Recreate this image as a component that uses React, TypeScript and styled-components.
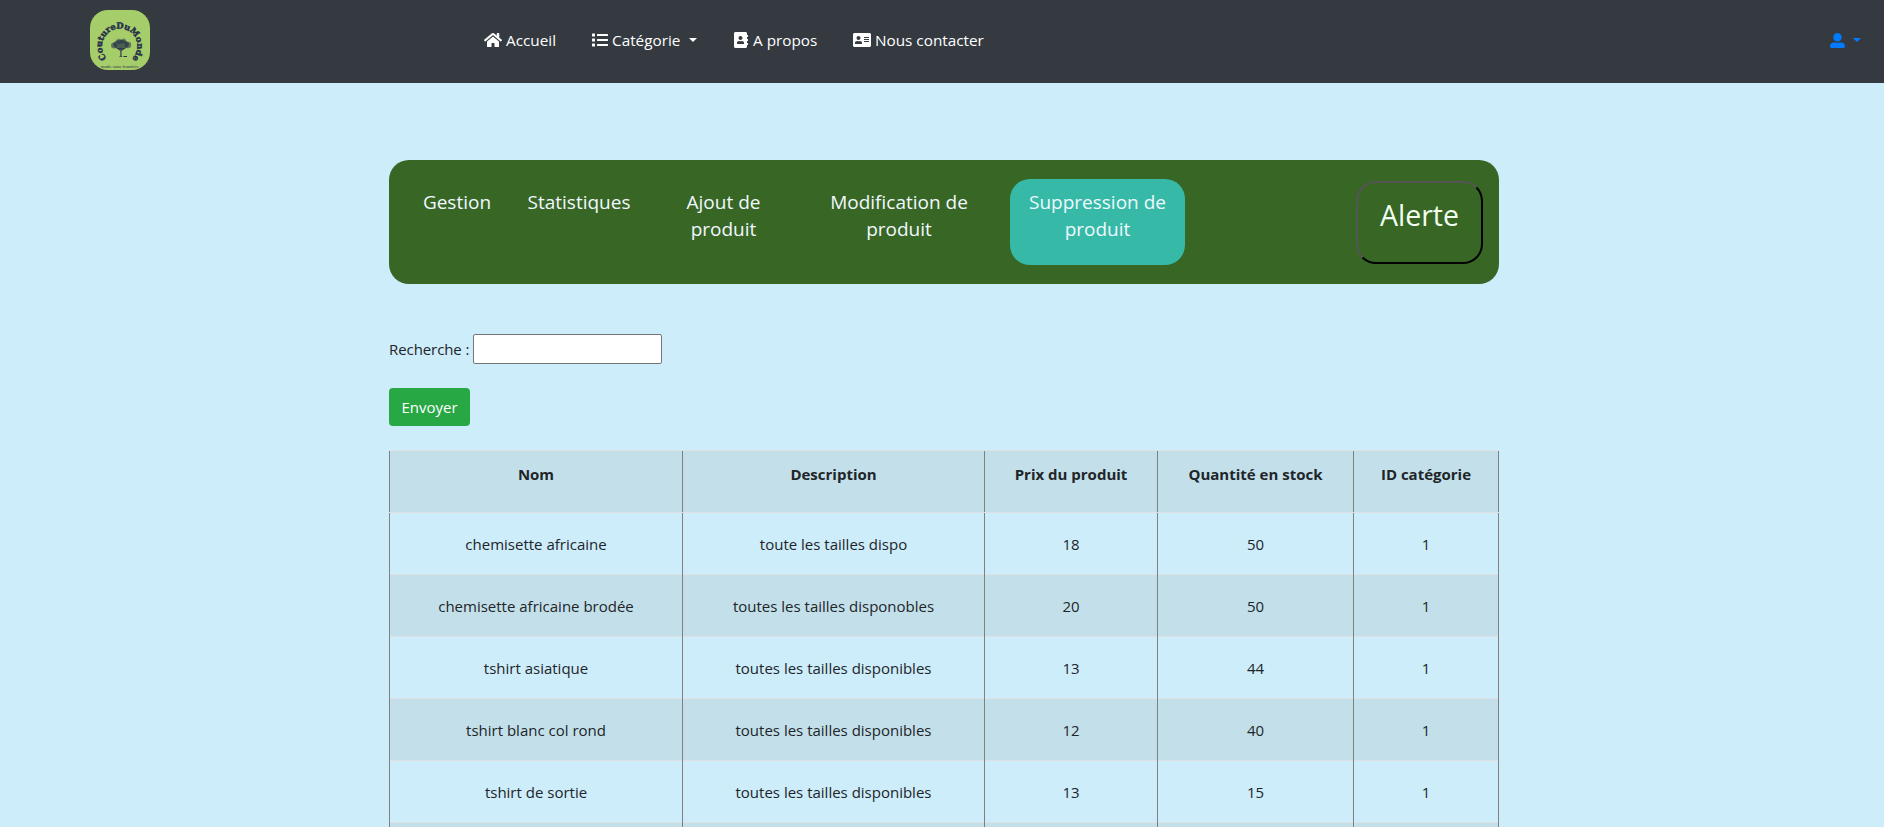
import React from "react";
import styled, { createGlobalStyle, css } from "styled-components";
import { FaHome, FaList, FaAddressBook, FaAddressCard, FaUserAlt } from "react-icons/fa";

const GlobalStyle = createGlobalStyle`
  *, *::before, *::after { box-sizing: border-box; }
  body {
    margin: 0;
    background: #cdedfa;
    color: #212529;
    font-family: "Segoe UI", "Open Sans", "Noto Sans", sans-serif;
    font-size: 15px;
    line-height: 24px;
  }
`;

const Screen = styled.div`
  height: 100vh;
  overflow: hidden;
`;

const Navbar = styled.nav`
  display: flex;
  align-items: center;
  height: 83px;
  padding: 0 23px 3px 90px;
  background: #343a40;
`;

const Logo = styled.svg`
  display: block;
  width: 60px;
  height: 60px;
  margin-right: 334px;
`;

const NavList = styled.ul`
  display: flex;
  gap: 36px;
  margin: 0;
  padding: 0;
  list-style: none;
`;

const NavLink = styled.a<{ $width: number }>`
  display: flex;
  align-items: center;
  width: ${(p) => p.$width}px;
  color: #fff;
  font-size: 15.3px;
  white-space: nowrap;
  text-decoration: none;

  svg {
    flex: none;
    margin-right: 4px;
  }
`;

const Caret = styled.span`
  margin-left: 9px;
  border-top: 4.8px solid;
  border-right: 4.8px solid transparent;
  border-left: 4.8px solid transparent;
`;

const UserMenu = styled.a`
  display: flex;
  align-items: center;
  margin-left: auto;
  color: #007bff;

  ${Caret} {
    margin-left: 8px;
  }
`;

const Page = styled.main`
  width: 1110px;
  margin: 77px 0 0 389px;
`;

const Banner = styled.div`
  display: flex;
  align-items: flex-start;
  height: 124px;
  padding: 19px 16px 0 15px;
  border-radius: 20px;
  background: #386625;
`;

const Tab = styled.a<{ $width: number; $active?: boolean }>`
  width: ${(p) => p.$width}px;
  height: 86px;
  padding-top: 10px;
  border-radius: 20px;
  color: #f0f8ff;
  font-size: 19px;
  line-height: 27px;
  text-align: center;
  white-space: pre-line;
  ${(p) =>
    p.$active &&
    css`
      margin-left: 11px;
      background: #36baa7;
    `}
`;

const AlertButton = styled.button`
  width: 127px;
  height: 83px;
  margin: 2px 0 0 auto;
  padding: 0 0 15px;
  border: 2px solid;
  border-color: #555 #000 #000 #555;
  border-radius: 20px;
  background: transparent;
  color: #f0fff0;
  font: 28.5px "Segoe UI", "Open Sans", sans-serif;
`;

const SearchForm = styled.form`
  margin-top: 50px;
`;

const Field = styled.label`
  display: flex;
  align-items: center;
`;

const FieldName = styled.span`
  width: 84px;
  letter-spacing: -0.08px;
`;

const SearchInput = styled.input`
  width: 189px;
  height: 30px;
  border: 1px solid #767676;
  border-radius: 2px;
  background: #fff;
`;

const SubmitButton = styled.button`
  display: block;
  width: 81px;
  height: 38px;
  margin-top: 24px;
  padding: 0;
  border: 0;
  border-radius: 4px;
  background: #28a745;
  color: #fff;
  font: inherit;
`;

const Table = styled.div`
  margin-top: 24px;
`;

const Row = styled.div<{ $header?: boolean; $striped?: boolean }>`
  display: grid;
  grid-template-columns: 293px 302px 173px 196px 146px;
  height: 62px;
  border-top: 1px solid #dee0e3;
  text-align: center;
  font-weight: ${(p) => (p.$header ? 700 : 400)};
  line-height: ${(p) => (p.$header ? 46 : 62)}px;
  background: ${(p) => (p.$striped ? "#c3e0ea" : "transparent")};
`;

const Cell = styled.div`
  border-left: 1px solid #808080;

  &:last-child {
    border-right: 1px solid #808080;
  }
`;

const columns = ["Nom", "Description", "Prix du produit", "Quantité en stock", "ID catégorie"];

const products = [
  ["chemisette africaine", "toute les tailles dispo", "18", "50", "1"],
  ["chemisette africaine brodée", "toutes les tailles disponobles", "20", "50", "1"],
  ["tshirt asiatique", "toutes les tailles disponibles", "13", "44", "1"],
  ["tshirt blanc col rond", "toutes les tailles disponibles", "12", "40", "1"],
  ["tshirt de sortie", "toutes les tailles disponibles", "13", "15", "1"],
  ["", "", "", "", ""],
];

const BrandLogo = () => (
  <Logo viewBox="0 0 60 60">
    <rect width="60" height="60" rx="18" fill="#a5cd69" />
    <path id="brand-arc" d="M16.8 48.2 A17.6 17.6 0 1 1 42.6 48.2" fill="none" />
    <text
      fill="#27304a"
      stroke="#27304a"
      strokeWidth="0.45"
      fontFamily="DejaVu Serif, serif"
      fontWeight="700"
      fontSize="8.4"
    >
      <textPath href="#brand-arc" textLength="82">CoutureDuMonde</textPath>
    </text>
    <g fill="#27304a">
      <ellipse cx="31" cy="34.5" rx="8" ry="4.6" opacity="0.7" />
      <circle cx="24" cy="35.5" r="3" opacity="0.55" />
      <circle cx="38" cy="35" r="3.2" opacity="0.55" />
      <circle cx="29" cy="31.5" r="2.8" opacity="0.5" />
      <circle cx="33.5" cy="31.2" r="2.6" opacity="0.5" />
      <path d="M26 38l4.2 3V46l-1.4 1h4l-1.2-1V41l4.4-3z" opacity="0.8" />
      <path d="M33.5 46h3.5v1h-3.5z" />
    </g>
    <text x="11" y="58" fill="#27304a" fontFamily="Liberation Serif, serif" fontSize="4.6" textLength="38">
      mode sans frontière
    </text>
  </Logo>
);

export default function App() {
  return (
    <Screen>
      <GlobalStyle />
      <Navbar>
        <BrandLogo />
        <NavList>
          <li><NavLink $width={72}><FaHome size={18} />Accueil</NavLink></li>
          <li><NavLink $width={105}><FaList size={16} />Catégorie<Caret /></NavLink></li>
          <li><NavLink $width={84}><FaAddressBook size={16} />A propos</NavLink></li>
          <li><NavLink $width={130}><FaAddressCard size={18} />Nous contacter</NavLink></li>
        </NavList>
        <UserMenu><FaUserAlt size={15} /><Caret /></UserMenu>
      </Navbar>
      <Page>
        <Banner>
          <Tab $width={106}>Gestion</Tab>
          <Tab $width={138}>Statistiques</Tab>
          <Tab $width={151}>{"Ajout de\nproduit"}</Tab>
          <Tab $width={200}>{"Modification de\nproduit"}</Tab>
          <Tab $width={175} $active>{"Suppression de\nproduit"}</Tab>
          <AlertButton>Alerte</AlertButton>
        </Banner>
        <SearchForm>
          <Field><FieldName>Recherche :</FieldName><SearchInput /></Field>
          <SubmitButton type="button">Envoyer</SubmitButton>
        </SearchForm>
        <Table>
          <Row $header $striped>{columns.map((c) => <Cell key={c}>{c}</Cell>)}</Row>
          {products.map((p, i) => (
            <Row key={i} $striped={i % 2 === 1}>
              {p.map((value, j) => <Cell key={j}>{value}</Cell>)}
            </Row>
          ))}
        </Table>
      </Page>
    </Screen>
  );
}
